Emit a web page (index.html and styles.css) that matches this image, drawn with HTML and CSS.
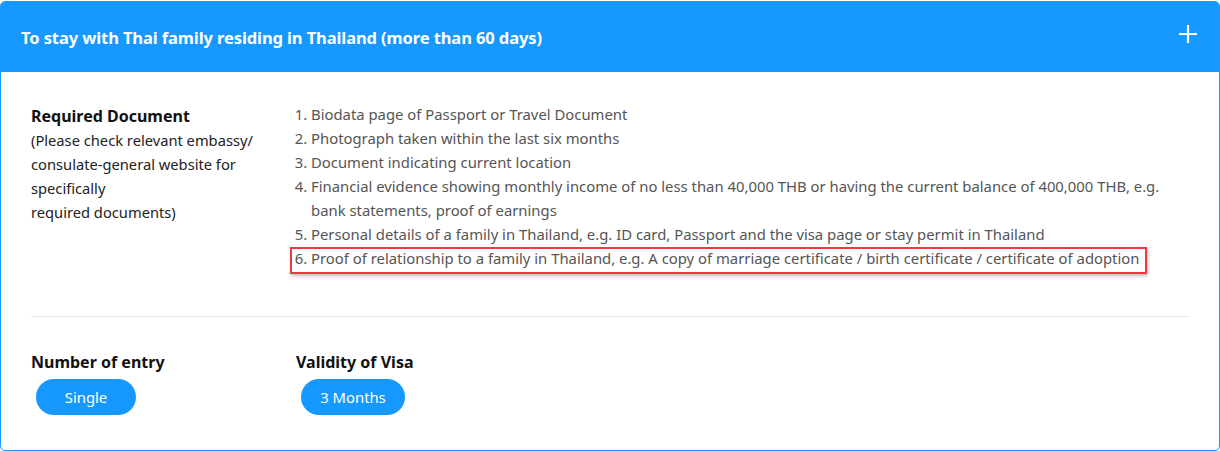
FILE: index.html
```html
<!DOCTYPE html>
<html>
<head>
<meta charset="utf-8">
<link rel="stylesheet" href="styles.css">
</head>
<body>
<div class="card">
  <div class="card-head">
    <h2 class="card-title">To stay with Thai family residing in Thailand (more than 60 days)</h2>
    <svg class="plus" width="20" height="20" viewBox="0 0 20 20"><path d="M10 1v18M1 10h18" stroke="#fff" stroke-width="2.2" fill="none"/></svg>
  </div>
  <div class="card-body">
    <div class="doc-row">
      <div class="doc-label">
        <div class="label-strong">Required Document</div>
        <div class="label-note">(Please check relevant embassy/<br>consulate-general website for<br>specifically<br>required documents)</div>
      </div>
      <ol class="doc-list">
        <li>Biodata page of Passport or Travel Document</li>
        <li>Photograph taken within the last six months</li>
        <li>Document indicating current location</li>
        <li>Financial evidence showing monthly income of no less than 40,000 THB or having the current balance of 400,000 THB, e.g. bank statements, proof of earnings</li>
        <li>Personal details of a family in Thailand, e.g. ID card, Passport and the visa page or stay permit in Thailand</li>
        <li class="highlight">Proof of relationship to a family in Thailand, e.g. A copy of marriage certificate / birth certificate / certificate of adoption</li>
      </ol>
    </div>
    <hr class="divider">
    <div class="meta-row">
      <div class="meta meta-entry">
        <div class="label-strong">Number of entry</div>
        <span class="pill pill-single">Single</span>
      </div>
      <div class="meta">
        <div class="label-strong">Validity of Visa</div>
        <span class="pill pill-months">3 Months</span>
      </div>
    </div>
  </div>
</div>
</body>
</html>
```
FILE: styles.css
```css
* { box-sizing: border-box; }
html, body { margin: 0; padding: 0; background: #fff; }
body {
  font-family: "Noto Sans", "Open Sans", sans-serif;
  padding-top: 1px;
}
.card {
  width: 1220px;
  height: 450px;
  border: 1px solid #1a98fe;
  border-radius: 5px;
  overflow: hidden;
  background: #fff;
}
.card-head {
  height: 70px;
  background: #1798fe;
  display: flex;
  align-items: center;
  justify-content: space-between;
  padding: 0 21px 0 20px;
}
.card-title {
  margin: 0;
  color: #fff;
  font-size: 16.5px;
  font-weight: 700;
  letter-spacing: -0.1px;
}
.plus { margin-top: -6px; }
.card-body {
  padding: 32px 30px 0 30px;
}
.doc-row {
  display: flex;
}
.doc-label {
  width: 262px;
  flex: none;
  color: #222;
}
.label-strong {
  font-size: 16px;
  font-weight: 700;
  color: #111;
  line-height: 24px;
}
.label-note {
  font-size: 14.7px;
  line-height: 24px;
}
.doc-list {
  margin: 0;
  padding: 0 0 0 18px;
  color: #555;
  font-size: 14.85px;
  line-height: 24px;
  flex: 1;
  margin-top: -2px;
}
.doc-list li { padding-left: 0; }
.highlight {
  position: relative;
}
.highlight::after {
  content: "";
  position: absolute;
  left: -21px;
  top: 1px;
  width: 853px;
  height: 23px;
  border: 2px solid #ee3a3e;
  box-shadow: 1px 2px 3px rgba(0,0,0,0.25);
}
.divider {
  border: 0;
  border-top: 1px solid #e8e8e8;
  margin: 46px 0 0 0;
  width: 1158px;
}
.meta-row {
  display: flex;
  padding-top: 33px;
}
.meta-entry { width: 265px; }
.label-strong + .pill { margin-top: 5px; }
.pill {
  display: inline-flex;
  align-items: center;
  justify-content: center;
  height: 36px;
  border-radius: 18px;
  background: #1798fe;
  color: #fff;
  font-size: 14.8px;
  margin-left: 5px;
}
.pill-single { width: 100px; }
.pill-months { width: 104px; }
```
